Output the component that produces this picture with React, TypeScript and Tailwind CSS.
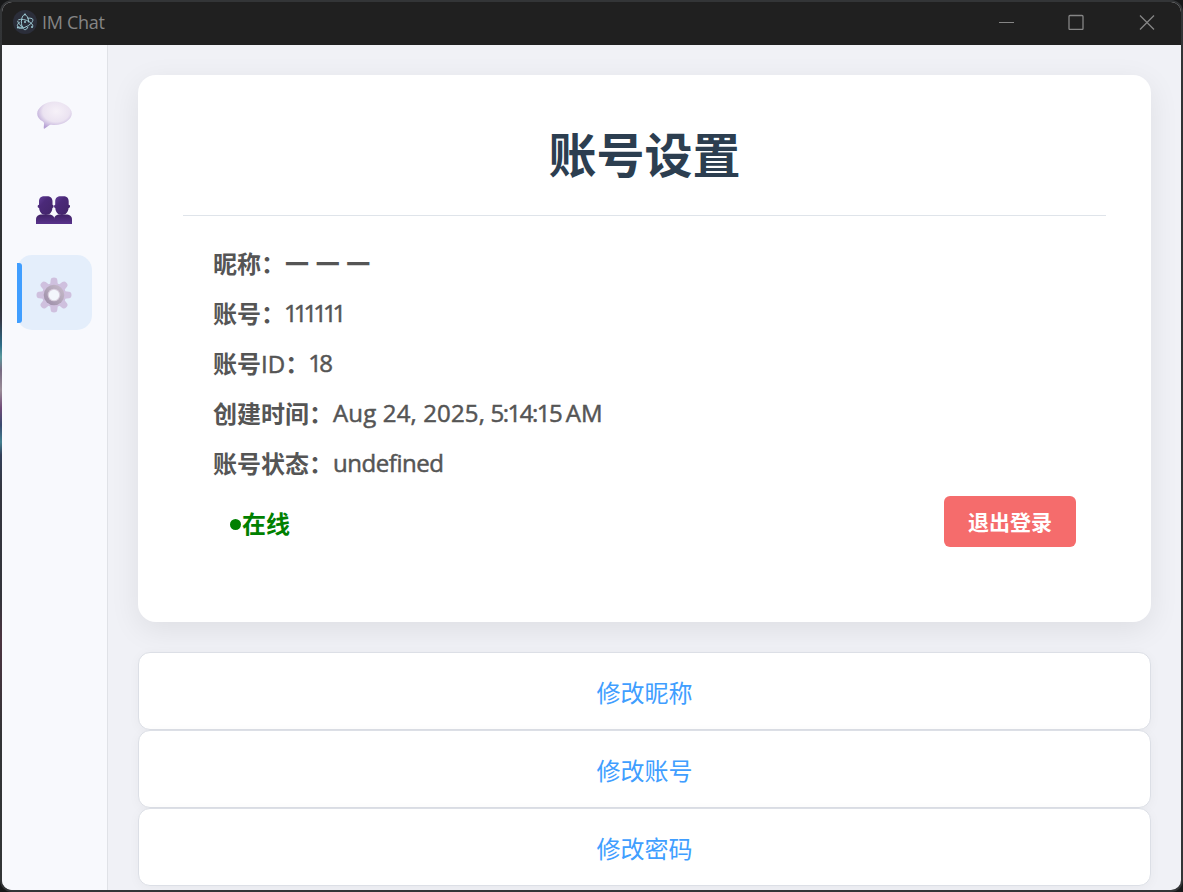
import React from "react";

const gearTeeth = [0, 45, 90, 135, 180, 225, 270, 315];

function ElectronLogo() {
  return (
    <svg className="size-6" viewBox="0 0 24 24" fill="none">
      <circle cx="12" cy="12" r="12" fill="#2b2e3a" />
      <g stroke="#9fccd6" strokeWidth="1" strokeLinecap="round">
        <path d="M5.6 9.700C8.300 8.600 12.700 9.600 16 11.600c2.500 1.500 4 3.200 3.900 4.500" />
        <path d="M14.900 8.200c2.400-.2 4.200.1 4.800 1 .9 1.600-1.500 4.700-5.300 6.900-3.300 1.900-6.600 2.700-8.400 2.100" />
        <path d="M6.600 12c-1.800 1.700-2.600 3.300-2.100 4.300.5.900 2.100 1.200 4.200.9" />
        <path d="M11.300 4.600c-1.600.5-2.900 3.500-2.900 7.200 0 4.400 1.600 7.900 3.700 7.900 1.100 0 2.100-1 2.800-2.600" />
        <path d="M13.200 5.400c1.500 1.200 2.400 3.600 2.400 6.600" />
        <path d="M4.700 11.200c.4 2 2.400 4.300 5.300 5.900" />
      </g>
      <circle cx="12" cy="12" r="1" fill="#9fccd6" />
      <circle cx="12" cy="4.600" r="1" fill="#9fccd6" />
      <circle cx="4.900" cy="17.600" r="1" fill="#9fccd6" />
      <circle cx="19" cy="16.900" r="1" fill="#9fccd6" />
    </svg>
  );
}

function ChatIcon() {
  return (
    <svg className="h-[28px] w-9" viewBox="0 0 36 28">
      <defs>
        <radialGradient id="bubble" cx="0.55" cy="0.36" r="0.65">
          <stop offset="0" stopColor="#f6f1f8" />
          <stop offset="0.6" stopColor="#ebe3f1" />
          <stop offset="1" stopColor="#b5a0d4" />
        </radialGradient>
      </defs>
      <path
        d="M18.500.6C9.500.8 1.200 6.600 1.200 12.700c0 3.200 2.100 5.800 5.700 7.900.8.500 1.200 1.300 1.100 2.300L7.700 27c0 .7.500.9 1 .5l4.600-3.200c.7-.5 1.400-.6 2.300-.5 1 .1 2 .2 3 .2 9.200-.2 17-5.600 17.200-11.300C36 6.600 27 .6 18.500.6Z"
        fill="url(#bubble)"
      />
    </svg>
  );
}

function PeopleIcon() {
  return (
    <svg className="h-[28px] w-9" viewBox="0 0 36 28">
      <defs>
        <linearGradient id="face" x1="0" y1="0" x2="1" y2="1">
          <stop offset="0" stopColor="#65419b" />
          <stop offset="0.35" stopColor="#4b2979" />
          <stop offset="1" stopColor="#412467" />
        </linearGradient>
        <linearGradient id="body" x1="0" y1="0" x2="0" y2="1">
          <stop offset="0" stopColor="#402266" />
          <stop offset="1" stopColor="#59338c" />
        </linearGradient>
      </defs>
      <path d="M0 28v-4.500c0-3.200 2.400-5 6-5h6.500c3.600 0 6 1.800 6 5V28Z" fill="url(#body)" />
      <path d="M18 28v-4.500c0-3.200 2.400-5 6-5h6c3.600 0 6 1.800 6 5V28Z" fill="url(#body)" />
      <g fill="url(#face)">
        <path d="M3 5.500C3 2.200 5 .3 8.500.3h2.500c3.300 0 5.500 1.900 5.500 5.200v3.300c1.500 0 1.500 3.200-.1 3.200-.2 4.200-2.600 7-6.600 7S3.500 16.200 3.100 12C1.200 12 1.200 8.800 3 8.800Z" />
        <path d="M19.200 5.500c0-3.300 2.200-5.200 5.500-5.200h2.500c3.500 0 5.500 1.900 5.500 5.200v3.300c1.900 0 1.900 3.200-.1 3.200-.4 4.200-2.800 7-6.700 7s-6.400-2.800-6.600-7c-1.600 0-1.600-3.200-.1-3.200Z" />
      </g>
    </svg>
  );
}

function GearIcon() {
  return (
    <svg className="size-9" viewBox="0 0 36 36">
      <defs>
        <linearGradient id="ring" x1="1" y1="0" x2="0" y2="1">
          <stop offset="0" stopColor="#c9bdcd" />
          <stop offset="0.5" stopColor="#b2a5b8" />
          <stop offset="1" stopColor="#9989a6" />
        </linearGradient>
      </defs>
      <circle cx="18" cy="18" r="12" fill="#cdbddc" />
      {gearTeeth.map((angle) => (
        <path
          key={angle}
          d="M14 9 14.700 3C15 1.200 16 .5 18 .5s3 .7 3.300 2.500L22 9Z"
          fill="#cfc0de"
          transform={`rotate(${angle} 18 18)`}
        />
      ))}
      <circle cx="18" cy="18" r="10.300" fill="url(#ring)" />
      <circle cx="18" cy="18" r="6.300" fill="#d8cddd" />
      <circle cx="18" cy="18" r="5.200" fill="#f3f6fc" />
    </svg>
  );
}

function Latin({ className, children }: { className: string; children: React.ReactNode }) {
  return <span className={`font-normal [-webkit-text-stroke:0.5px_#555] ${className}`}>{children}</span>;
}

function Field({ label, children }: { label: React.ReactNode; children: React.ReactNode }) {
  return (
    <div className="flex h-[50px] items-start text-2xl leading-[50px] whitespace-pre text-[#555]">
      <span className="pt-px font-bold">{label}</span>
      {children}
    </div>
  );
}

function ActionButton({ children }: { children: React.ReactNode }) {
  return (
    <button className="flex h-[78px] w-full items-center justify-center rounded-xl border border-[#dcdfe6] bg-white pt-[3px] text-2xl text-[#409eff] shadow-[0_2px_12px_rgba(0,0,0,0.04)]">
      {children}
    </button>
  );
}

export default function App() {
  return (
    <div className="h-[892px] w-[1183px] bg-[#171819] font-['Open_Sans','Noto_Sans_CJK_SC',sans-serif]">
      <div className="h-full w-full overflow-hidden rounded-xl bg-[linear-gradient(180deg,#333537_0px,#2f3133_310px,#333537_880px)]">
        <div className="h-full w-full bg-[linear-gradient(180deg,transparent_300px,#353846_320px,#2d6c88_345px,#5b9a9d_357px,#776a82_370px,#9a8d98_390px,#704b78_408px,#394a70_425px,#428090_442px,#34405a_455px,#33363f_490px,#34343b_600px,#4c3441_640px,transparent_740px)] bg-[length:2px_892px] bg-no-repeat p-[2px]">
          <div className="flex h-full w-full flex-col overflow-hidden rounded-[10px] bg-[#f0f1f6]">
            <header className="flex h-[43px] shrink-0 items-center bg-[#202020] text-[#858585]">
              <div className="flex flex-1 items-center gap-[5px] pb-1 pl-[11px]">
                <ElectronLogo />
                <span className="text-lg leading-none tracking-[-0.3px]">IM Chat</span>
              </div>
              <div className="flex items-center pr-[26px] pb-1">
                <svg className="mr-[53px] size-4" viewBox="0 0 16 16" stroke="currentColor" fill="none">
                  <path d="M0 8.500h15" />
                </svg>
                <svg className="mr-[55px] size-4" viewBox="0 0 16 16" stroke="currentColor" fill="none">
                  <rect x="1" y="1.500" width="14" height="14" rx="1" strokeWidth="1.300" />
                </svg>
                <svg className="size-4" viewBox="0 0 16 16" stroke="currentColor" fill="none">
                  <path d="m1 1.500 14 14m0-14-14 14" strokeWidth="1.300" />
                </svg>
              </div>
            </header>
            <div className="flex min-h-0 flex-1">
              <nav className="flex w-[106px] shrink-0 flex-col items-center gap-[10px] border-r border-[#e0e2e7] bg-[#f8f9fd] pt-[30px]">
                <div className="flex h-[80px] w-[75px] items-center justify-center pr-[2px]">
                  <ChatIcon />
                </div>
                <div className="flex h-[80px] w-[75px] items-end justify-center pr-[2px] pb-[21px]">
                  <PeopleIcon />
                </div>
                <div className="relative flex size-[75px] items-center justify-center rounded-[15px] bg-[#e4eefb] pt-[5px] pr-[2px]">
                  <span className="absolute top-2 left-0 h-[60px] w-[5px] rounded-r-[3px] bg-[#409eff]" />
                  <GearIcon />
                </div>
              </nav>
              <main className="flex min-w-0 flex-1 flex-col px-[30px] pt-[30px]">
                <section className="flex h-[547px] shrink-0 flex-col rounded-[18px] bg-white px-[45px] pt-[45px] shadow-[0_8px_30px_rgba(0,0,0,0.08)]">
                  <h1 className="flex h-24 shrink-0 items-start justify-center border-b border-[#dfe4ea] text-5xl leading-[70px] font-bold text-[#2c3e50]">
                    账号设置
                  </h1>
                  <div className="flex flex-col px-[30px] pt-[22px]">
                    <Field label="昵称：">
                      <span className="pt-px font-bold tracking-[0.200px]">一 一 一</span>
                    </Field>
                    <Field label="账号：">
                      <Latin className="-ml-px tracking-[-4px]">111111</Latin>
                    </Field>
                    <Field
                      label={
                        <>
                          账号<Latin className="">ID</Latin>：
                        </>
                      }
                    >
                      <Latin className="-ml-px tracking-[-2.500px]">18</Latin>
                    </Field>
                    <Field label="创建时间：">
                      <Latin className="tracking-[0.150px]">Aug 24, 2025, </Latin>
                      <Latin className="-ml-px tracking-[-1.500px]">5:14:15</Latin>
                      <Latin className="ml-[1.500px]">{"\u202fAM"}</Latin>
                    </Field>
                    <Field label="账号状态：">
                      <Latin className="tracking-[-0.450px]">undefined</Latin>
                    </Field>
                    <div className="mt-2 flex h-[51px] items-center justify-between">
                      <div className="flex items-center pt-1 pl-[17px] text-2xl font-bold text-[#008000]">
                        <span className="mt-0.5 mr-px size-[11px] rounded-full bg-[#008000]" />
                        在线
                      </div>
                      <button className="flex h-[51px] w-[132px] items-center justify-center rounded-md bg-[#f56c6c] pt-0.5 text-[21px] font-bold text-white">
                        退出登录
                      </button>
                    </div>
                  </div>
                </section>
                <div className="mt-[30px] flex shrink-0 flex-col">
                  <ActionButton>修改昵称</ActionButton>
                  <ActionButton>修改账号</ActionButton>
                  <ActionButton>修改密码</ActionButton>
                </div>
              </main>
            </div>
          </div>
        </div>
      </div>
    </div>
  );
}
